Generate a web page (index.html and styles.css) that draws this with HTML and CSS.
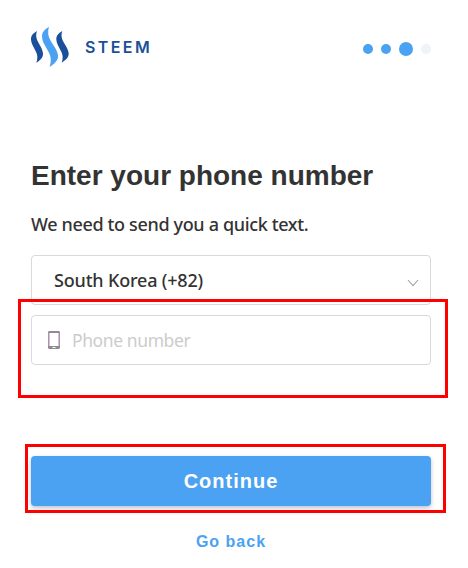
FILE: index.html
```html
<!DOCTYPE html>
<html lang="en">
<head>
    <meta charset="UTF-8">
    <title>Steem - Enter your phone number</title>
    <meta name="viewport" content="width=device-width, initial-scale=1.0">
    <link rel="stylesheet" href="styles.css">
</head>
<body>

<div class="container">
    <div class="header">
        <div class="logo">
            <svg class="logo-mark" viewBox="15 12 117 126" aria-hidden="true">
                <path fill="#1a5099" d="M33 27C23 33 14 40 15 53C17 73 34 87 34 104C34 111 33 117 31 122C42 115 52 107 51 94C49 75 33 61 31 45C30 38 31 32 33 27Z"/>
                <path fill="#4ba2f2" d="M69 14C57 22 47 30 48 45C50 69 72 87 74 108C75 118 73 127 71 135C85 125 98 115 96 99C93 77 70 59 67 38C66 29 67 21 69 14Z"/>
                <path fill="#1a5099" d="M109 27C99 33 90 40 91 53C93 73 110 87 110 104C110 111 109 117 107 122C118 115 129 107 128 94C126 75 109 61 107 45C106 38 107 32 109 27Z"/>
            </svg>
            <span class="logo-text">STEEM</span>
        </div>
        <div class="steps">
            <span class="step"></span>
            <span class="step"></span>
            <span class="step current"></span>
            <span class="step waiting"></span>
        </div>
    </div>

    <h1>Enter your phone number</h1>
    <p class="intro">We need to send you a quick text.</p>

    <div class="field country">
        <span>South Korea (+82)</span>
        <svg class="arrow" viewBox="0 0 12 8" aria-hidden="true">
            <path d="M1 1L6 6.7L11 1" fill="none" stroke="#a3a3a3" stroke-width="1.1"/>
        </svg>
    </div>

    <div class="phone-area">
        <label class="field phone">
            <svg class="mobile" viewBox="0 0 12 18" aria-hidden="true">
                <path fill="#8c8c8c" d="M1 0h10l1 1v16l-1 1H1l-1-1V1z"/>
                <path fill="#b48cb8" d="M0 2h1.500v13H0zM10.500 2H12v13h-1.500z"/>
                <path fill="#fff" d="M1.500 2h9v13h-9zM4.500 16h3v1h-3z"/>
            </svg>
            <input type="text" placeholder="Phone number">
        </label>
    </div>

    <div class="submit-area">
        <button>Continue</button>
    </div>
    <a class="back">Go back</a>
</div>

</body>
</html>
```
FILE: styles.css
```css
body {
    font-family: "Noto Sans", sans-serif;
    margin: 0;
    background-color: #fff;
    color: #333;
}
.container {
    width: 400px;
    padding: 26px 0 0 31px;
}
.header {
    display: flex;
    justify-content: space-between;
    height: 42px;
}
.logo {
    display: flex;
    align-items: center;
}
.logo-mark {
    width: 39px;
    height: 42px;
}
.logo-text {
    font-family: Inter, sans-serif;
    font-size: 16px;
    font-weight: 600;
    line-height: 20px;
    letter-spacing: 2.4px;
    color: #1a5099;
    margin-left: 15px;
}
.steps {
    display: flex;
    align-items: center;
    gap: 8px;
    padding-top: 4px;
}
.step {
    width: 10px;
    height: 10px;
    border-radius: 50%;
    background-color: #4ba2f2;
}
.step.current {
    width: 14px;
    height: 14px;
}
.step.waiting {
    background-color: #edf3f9;
}
h1 {
    font-family: "Liberation Sans", Arial, sans-serif;
    font-size: 28px;
    line-height: 34px;
    white-space: nowrap;
    margin: 91px 0 0;
}
.intro {
    font-size: 18px;
    font-weight: 500;
    line-height: 24px;
    letter-spacing: -0.35px;
    margin: 19px 0 19px;
}
.field {
    display: flex;
    align-items: center;
    box-sizing: border-box;
    height: 50px;
    border: 1px solid #d9d9d9;
    border-radius: 4px;
    font-size: 18px;
}
.country {
    justify-content: space-between;
    padding: 0 11px 0 22px;
    font-weight: 500;
    letter-spacing: -0.18px;
}
.arrow {
    width: 12px;
    height: 8px;
    margin-top: 5px;
}
.phone {
    padding: 0 16px;
}
.mobile {
    width: 12px;
    height: 18px;
}
input {
    flex: 1;
    min-width: 0;
    border: none;
    outline: none;
    padding: 0;
    margin-left: 12px;
    font: inherit;
    font-size: 17.5px;
    letter-spacing: -0.4px;
    color: #333;
}
input::placeholder {
    color: #ccc;
}
.phone-area, .submit-area {
    position: relative;
}
.phone-area {
    margin-top: 10px;
}
.submit-area {
    margin-top: 91px;
}
/* red highlight frames */
.phone-area::after, .submit-area::after {
    content: "";
    position: absolute;
    border: 3px solid #f00;
    pointer-events: none;
}
.phone-area::after {
    inset: -16px -17px -33px -13px;
}
.submit-area::after {
    inset: -12px -15px -7px -6px;
}
button {
    display: block;
    width: 100%;
    height: 50px;
    padding: 0;
    border: none;
    border-radius: 4px;
    background-color: #4ba2f2;
    box-shadow: 0 2px 4px rgba(40, 50, 90, 0.3);
    color: white;
    font-family: "Liberation Sans", Arial, sans-serif;
    font-size: 20px;
    font-weight: bold;
    letter-spacing: 1px;
    cursor: pointer;
}
.back {
    display: block;
    margin-top: 26px;
    font-family: "Liberation Sans", Arial, sans-serif;
    font-size: 16px;
    font-weight: bold;
    line-height: 20px;
    letter-spacing: 1px;
    text-align: center;
    color: #4ba2f2;
}
```
